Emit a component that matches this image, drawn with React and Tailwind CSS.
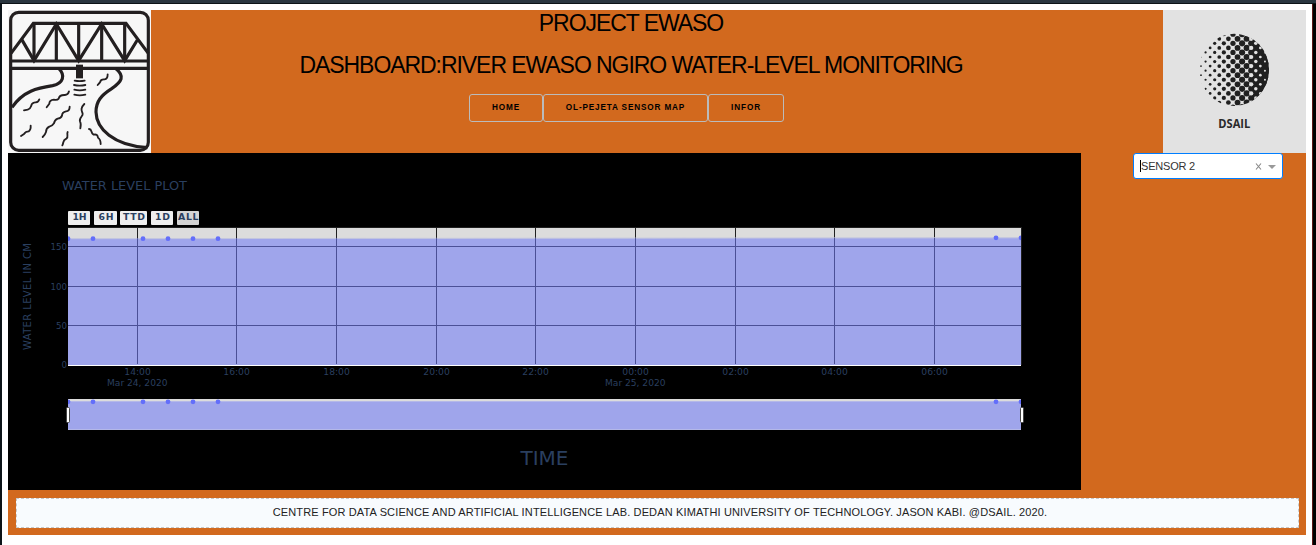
import React from "react";

const LINE = "#231f20";

function BridgeLogo() {
  return (
    <svg className="block h-[143px] w-[143px] shrink-0 bg-[#f7f7f7]" viewBox="24 30 429 429" fill="none" stroke={LINE} strokeWidth="9.5">
      <rect x="32" y="37" width="413" height="414" rx="24" fill="#f7f7f7" />
      <path d="M33 160 L100 70 H378 L445 160" />
      <path d="M102 70 V182 M169 70 V182 M236 70 V182 M305 70 V182 M374 70 V182" />
      <path d="M65 118 L102 182 L169 72 L236 182 L305 72 L374 182 L412 120" />
      <path d="M32 183 H445 M32 205 H445" />
      <path d="M177 206 C196 226 191 250 158 257 C112 264 70 273 36 322" />
      <path d="M348 206 C375 228 366 245 335 266 C304 286 288 303 288 336 C289 386 340 437 442 443" />
      <rect x="228" y="194" width="21" height="41" fill={LINE} stroke="none" />
      <path strokeWidth="5.5" strokeLinecap="round" d="M224 242 Q239 245 254 242 M222 255 Q239 259 256 255 M223 269 Q239 273 256 269 M223 284 Q239 288 256 284" />
      <g strokeWidth="5.5" strokeLinecap="round" strokeLinejoin="round">
        <path d="M323 223 Q323 237 314 238 Q302 237 301 245 Q299 248 293 255" />
        <path d="M207 274 Q204 286 193 285 Q178 285 176 296 Q172 301 162 299 Q148 300 148 311 L140 322" />
        <path d="M118 298 Q115 308 106 307 Q94 309 94 317 Q91 326 83 329 L72 331" />
        <path d="M209 320 Q209 333 198 334 Q186 336 186 347 Q183 355 173 356 Q164 359 162 370 Q157 378 148 380 Q138 385 138 396 Q136 403 128 411" />
        <path d="M253 312 C240 325 245 332 248 341 C250 348 236 354 240 364 Q244 371 241 385" />
        <path d="M92 377 Q93 390 86 394 Q77 394 72 402 L63 408" />
        <path d="M203 396 C199 404 207 410 199 416 C187 421 192 427 187 436" />
        <path d="M267 387 C278 388 270 397 281 404 C290 402 293 406 294 413 Q302 418 302 432" />
      </g>
    </svg>
  );
}

const darkDots = [];
const lightDots = [];
for (let k = 0; k < 16; k++) {
  const x = 153 + k * 13.7;
  const r = Math.min(9.2, 2.6 + k * 0.75);
  for (let j = -4; j < 9; j++) {
    const base = 171 + j * 27.3;
    darkDots.push([x, base + (k % 2 ? 13.65 : 0), r]);
    if (k >= 11) lightDots.push([x, base + (k % 2 ? 0 : 13.65), 6.3 - (k - 11) * 1.1]);
  }
}

function DsailLogo() {
  return (
    <svg className="block h-[143px] w-[143px] shrink-0 bg-[#e2e2e2]" viewBox="39 30 429 429">
      <defs>
        <clipPath id="globe"><ellipse cx="252.5" cy="209.5" rx="104.5" ry="108.5" /></clipPath>
      </defs>
      <g clipPath="url(#globe)">
        <rect x="303" y="90" width="60" height="240" fill="#202020" />
        {darkDots.map(([x, y, r], i) => <circle key={i} cx={x} cy={y} r={r} fill="#202020" />)}
        {lightDots.map(([x, y, r], i) => <circle key={i} cx={x} cy={y} r={r} fill="#e2e2e2" />)}
      </g>
      <text x="205" y="384" textLength="96" lengthAdjust="spacingAndGlyphs" fill="#2a2a2a" className="font-['Open_Sans',sans-serif] text-[35px] font-bold">DSAIL</text>
    </svg>
  );
}

const ranges = [
  { label: "1H", x: 68, w: 22, tx: 72.5, tw: 14 },
  { label: "6H", x: 94, w: 23, tx: 98.5, tw: 15 },
  { label: "TTD", x: 120, w: 27, tx: 123, tw: 22 },
  { label: "1D", x: 151, w: 22, tx: 155, tw: 15 },
  { label: "ALL", x: 177, w: 22, tx: 178, tw: 20.5 },
];
const xTicks = [
  [137.5, "14:00", "Mar 24, 2020"], [236.5, "16:00"], [336.5, "18:00"], [436.5, "20:00"], [535.5, "22:00"],
  [635.5, "00:00", "Mar 25, 2020"], [735.5, "02:00"], [834.5, "04:00"], [934.5, "06:00"],
];
const yTicks = [[246.5, "150", 50.5, 16.5], [286.5, "100", 50.5, 16.5], [325.5, "50", 56, 11], [365, "0", 61.5, 5.5]];
const points = [68, 93, 143, 168, 193, 218, 996, 1021];

function Chart() {
  return (
    <svg className="block h-[337px] w-[1073px] shrink-0 bg-black font-['DejaVu_Sans',sans-serif]" viewBox="8 153 1073 337" fill="#2a3f5f">
      <defs>
        <clipPath id="plot"><rect x="68" y="228" width="953" height="202" /></clipPath>
      </defs>
      <text x="62" y="190" fontSize="12" textLength="125" lengthAdjust="spacingAndGlyphs">WATER LEVEL PLOT</text>
      {ranges.map((b) => (
        <g key={b.label}>
          <rect x={b.x} y="211" width={b.w} height="14" rx="1" fill={b.label === "ALL" ? "#d4d4d4" : "#eeeeee"} />
          <text x={b.tx} y="220" fontSize="9.3" fontWeight="bold" textLength={b.tw} lengthAdjust="spacing">{b.label}</text>
        </g>
      ))}

      <rect x="68" y="228" width="953" height="137" fill="#dcdcdc" />
      <g stroke="#202020" shapeRendering="crispEdges">
        <path d="M68 227.5 H1022 M1021.5 228 V365" />
        {xTicks.map(([x]) => <path key={x} d={`M${x} 228 V364`} />)}
      </g>
      <path d="M68 238.7 L1021 237.8 V365 H68 Z" fill="#9fa5eb" />
      <path d="M68 238.7 L1021 237.8" stroke="#c2c5df" />
      <g stroke="#4b5096" shapeRendering="crispEdges">
        {xTicks.map(([x]) => <path key={x} d={`M${x} 238 V364`} />)}
        {yTicks.slice(0, 3).map(([y]) => <path key={y} d={`M68 ${y} H1021`} />)}
      </g>
      <path d="M68 365.5 H1021" stroke="#ffffff" />

      {yTicks.map(([y, label, x, w]) => (
        <text key={label} x={x} y={y + 3.3} fontSize="9.2" textLength={w} lengthAdjust="spacingAndGlyphs">{label}</text>
      ))}
      {xTicks.map(([x, time, day]) => (
        <g key={time}>
          <text x={x - 13.2} y="375" fontSize="9.2" textLength="26.5" lengthAdjust="spacingAndGlyphs">{time}</text>
          {day && <text x={x - 30.5} y="386" fontSize="9.2" textLength="60.5" lengthAdjust="spacingAndGlyphs">{day}</text>}
        </g>
      ))}
      <text transform="translate(31 350) rotate(-90)" fontSize="10" textLength="107" lengthAdjust="spacing">WATER LEVEL IN CM</text>

      <rect x="68" y="399" width="953" height="31" fill="#dcdcdc" />
      <rect x="68" y="402" width="953" height="28" fill="#9fa5eb" />
      <path d="M68 401.5 H1021 M68 429.5 H1021" stroke="#b4b8e8" />
      <g clipPath="url(#plot)" fill="#636efa">
        {points.map((x) => (
          <g key={x}>
            <circle cx={x} cy={x > 900 ? 237.8 : 238.7} r="2.4" />
            <circle cx={x} cy="401.8" r="2.4" />
          </g>
        ))}
      </g>
      <g fill="#ffffff" stroke="#444444">
        <rect x="66.5" y="407.5" width="3" height="15" rx="1" />
        <rect x="1020.5" y="407.5" width="3" height="15" rx="1" />
      </g>
      <text x="520.5" y="465" fontSize="19" textLength="48" lengthAdjust="spacingAndGlyphs">TIME</text>
    </svg>
  );
}

function NavButton({ className, children }) {
  return (
    <button className={`h-7 rounded-[3px] border border-[#bbbbbb] pt-px pb-px text-center text-[8.2px] font-bold whitespace-nowrap text-black ${className}`}>
      {children}
    </button>
  );
}

export default function App() {
  return (
    <div className="flex h-[545px] w-[1316px] flex-col overflow-hidden bg-white font-['Liberation_Sans',Arial,sans-serif]">
      <div className="h-1 shrink-0 border-b border-[#0d1216] bg-[#2a353f]" />
      <div className="flex h-[541px]">
        <div className="w-[2px] shrink-0 bg-[#0c1318]" />
        <div className="flex w-[1310px] flex-col pt-1.5 pl-1.5">
          <div className="flex h-[525px] w-[1298px] flex-col bg-[#d2691e]">
            <header className="flex h-[143px] justify-between">
              <BridgeLogo />
              <div className="flex w-[1012px] flex-col items-center text-black">
                <h1 className="h-[42px] pr-[52px] text-[23px] leading-[26px] tracking-[-1.06px] whitespace-nowrap">PROJECT EWASO</h1>
                <h2 className="h-[42px] pr-[52px] text-[23px] leading-[26px] tracking-[-1.06px] whitespace-nowrap">DASHBOARD:RIVER EWASO NGIRO WATER-LEVEL MONITORING</h2>
                <nav className="flex pr-[61px]">
                  <NavButton className="w-[74px] tracking-[0.9px]">HOME</NavButton>
                  <NavButton className="w-[165px] tracking-[0.85px]">OL-PEJETA SENSOR MAP</NavButton>
                  <NavButton className="w-[76px] tracking-[0.9px]">INFOR</NavButton>
                </nav>
              </div>
              <DsailLogo />
            </header>
            <main className="flex h-[337px]">
              <Chart />
              <div className="flex-1 pl-[52px]">
                <div className="flex h-[26px] w-[150px] items-center rounded-[3px] border border-[#007eff] bg-white pr-1.5 pl-1.5 text-[11px] text-[#333333]">
                  <span className="h-3 w-px bg-black" />
                  <span className="flex-1 tracking-[-0.2px] whitespace-nowrap">SENSOR 2</span>
                  <svg className="h-[7px] w-[22px]" viewBox="0 0 22 7" fill="none">
                    <path d="M2 0.5 L7 6.5 M7 0.5 L2 6.5" stroke="#888888" strokeWidth="1.1" />
                    <path d="M14 2 H22 L18 6 Z" fill="#999999" />
                  </svg>
                </div>
              </div>
            </main>
            <footer className="mx-2 mt-2 flex h-[30px] w-[1283px] items-center justify-center border border-dashed border-[#c8c8c8] bg-[#f8fbfe] pb-0.5 pl-[5px] text-[11px] tracking-[0.14px] whitespace-nowrap text-[#222222]">
              CENTRE FOR DATA SCIENCE AND ARTIFICIAL INTELLIGENCE LAB. DEDAN KIMATHI UNIVERSITY OF TECHNOLOGY. JASON KABI. @DSAIL. 2020.
            </footer>
          </div>
        </div>
        <div className="w-1 shrink-0 border-l border-[#5e1717] bg-black" />
      </div>
    </div>
  );
}
